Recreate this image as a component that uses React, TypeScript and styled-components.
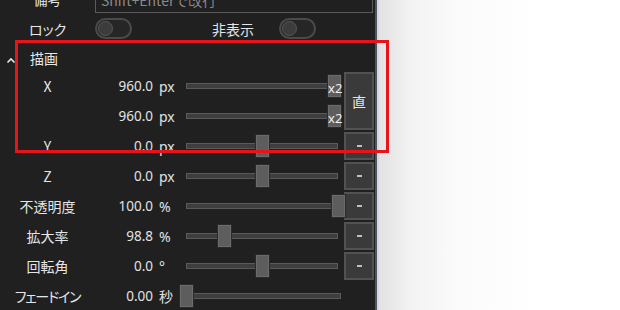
import styled, { createGlobalStyle } from 'styled-components'

const GlobalStyle = createGlobalStyle`
  html, body {
    margin: 0;
    padding: 0;
    background: #fff;
    overflow: hidden;
  }
  body {
    font-family: "Noto Sans CJK JP", "Noto Sans", sans-serif;
    font-feature-settings: "palt";
  }
`

type Param = {
  label: string
  value: string
  unit: string
  pct: number
  x2?: boolean
}

const params: Param[] = [
  { label: 'X', value: '960.0', unit: 'px', pct: 0.98, x2: true },
  { label: '', value: '960.0', unit: 'px', pct: 0.98, x2: true },
  { label: 'Y', value: '0.0', unit: 'px', pct: 0.5 },
  { label: 'Z', value: '0.0', unit: 'px', pct: 0.5 },
  { label: '不透明度', value: '100.0', unit: '%', pct: 1 },
  { label: '拡大率', value: '98.8', unit: '%', pct: 0.25 },
  { label: '回転角', value: '0.0', unit: '°', pct: 0.5 },
]

const App = () => {
  return (
    <Page>
      <GlobalStyle />
      <Panel>
        <Content>
          <NoteRow>
            <Label>備考</Label>
            <NoteInput placeholder="Shift+Enterで改行" />
          </NoteRow>
          <ToggleRow>
            <Label>ロック</Label>
            <Toggle><Knob /></Toggle>
            <Label>非表示</Label>
            <Toggle><Knob /></Toggle>
          </ToggleRow>
          <Header>
            <Chevron width="10" height="7" viewBox="0 0 10 7">
              <polyline points="1.5,5.5 5,2 8.5,5.5" fill="none" stroke="#e8e8e8" strokeWidth="1.6" />
            </Chevron>
            <HeaderTitle>描画</HeaderTitle>
          </Header>
          <ParamGrid>
            {params.map((p, i) => (
              <ParamRowCells key={i} p={p} row={i + 1} />
            ))}
            <SideButton style={{ gridRow: '1 / span 2' }}>直</SideButton>
            {[3, 4, 5, 6, 7].map((r) => (
              <SideButton key={r} style={{ gridRow: r }}>
                <Dash />
              </SideButton>
            ))}
            <Label style={{ gridRow: 8 }} $tight>フェードイン</Label>
            <Value style={{ gridRow: 8 }}>0.00</Value>
            <Unit style={{ gridRow: 8 }}>秒</Unit>
            <SliderCell style={{ gridRow: 8 }} $wide>
              <Slider $width={155}>
                <Track />
                <Thumb style={{ left: -6 }} />
              </Slider>
            </SliderCell>
          </ParamGrid>
        </Content>
      </Panel>
      <Divider />
      <Backdrop />
      <Highlight />
    </Page>
  )
}

const ParamRowCells = ({ p, row }: { p: Param; row: number }) => (
  <>
    <Label style={{ gridRow: row }}>{p.label}</Label>
    <Value style={{ gridRow: row }}>{p.value}</Value>
    <Unit style={{ gridRow: row }}>{p.unit}</Unit>
    <SliderCell style={{ gridRow: row }}>
      <Slider $width={152}>
        <Track />
        <Thumb style={{ left: Math.round(p.pct * 152 - 6.5) }}>
          {p.x2 && <ThumbTag>x2</ThumbTag>}
        </Thumb>
      </Slider>
    </SliderCell>
  </>
)

const Page = styled.div`
  position: relative;
  display: flex;
  width: 620px;
  height: 310px;
  overflow: hidden;
`

const Panel = styled.div`
  width: 375px;
  height: 310px;
  background: #202020;
  overflow: hidden;
  flex-shrink: 0;
`

const Content = styled.div`
  margin-top: -16px;
  display: flex;
  flex-direction: column;
`

const Label = styled.div<{ $tight?: boolean }>`
  width: 95px;
  text-align: center;
  color: #e6e6e6;
  font-size: 14px;
  letter-spacing: ${(p) => (p.$tight ? '-1.2px' : 'normal')};
  align-self: center;
  white-space: nowrap;
`

const NoteRow = styled.div`
  display: flex;
  align-items: center;
  height: 30px;
`

const NoteInput = styled.input`
  box-sizing: border-box;
  width: 278px;
  height: 26px;
  margin-top: 2px;
  background: #202020;
  border: 1px solid #5a5a5a;
  color: #ddd;
  font-family: "Noto Sans CJK JP", "Noto Sans", sans-serif;
  font-size: 14px;
  padding: 0 5px;
  outline: none;

  &::placeholder {
    color: #8a8a8a;
  }
`

const ToggleRow = styled.div`
  display: grid;
  grid-template-columns: 95px 92px 92px 40px;
  align-items: center;
  height: 30px;

  & > ${Label} {
    width: auto;
  }
`

const Toggle = styled.div`
  position: relative;
  box-sizing: border-box;
  width: 37px;
  height: 21px;
  border: 2px solid #4a4a4a;
  border-radius: 11px;
  background: #262626;
  margin-top: -1px;
`

const Knob = styled.div`
  position: absolute;
  left: 1px;
  top: 1px;
  box-sizing: border-box;
  width: 15px;
  height: 15px;
  border-radius: 50%;
  background: #3c3c3c;
  border: 1.5px solid #585858;
`

const Header = styled.div`
  display: flex;
  align-items: center;
  height: 27px;
  padding-left: 6px;
  gap: 14px;
`

const Chevron = styled.svg`
  display: block;
  margin-top: 5px;
`

const HeaderTitle = styled.span`
  color: #e6e6e6;
  font-size: 14px;
`

const ParamGrid = styled.div`
  display: grid;
  grid-template-columns: 95px 58px 33px 158px 30px;
  grid-auto-rows: 30px;

  & > ${Label} {
    grid-column: 1;
  }
`

const Value = styled.div`
  grid-column: 2;
  align-self: center;
  text-align: right;
  color: #e2e2e2;
  font-size: 13.5px;
  font-family: "Noto Sans", "Noto Sans CJK JP", sans-serif;
`

const Unit = styled.div`
  grid-column: 3;
  align-self: center;
  padding-left: 6px;
  color: #e2e2e2;
  font-size: 14px;
  font-family: "Noto Sans", "Noto Sans CJK JP", sans-serif;
`

const SliderCell = styled.div<{ $wide?: boolean }>`
  grid-column: ${(p) => (p.$wide ? '4 / span 2' : '4')};
  display: flex;
  align-items: center;
`

const Slider = styled.div<{ $width: number }>`
  position: relative;
  width: ${(p) => p.$width}px;
  height: 22px;
  display: flex;
  align-items: center;
`

const Track = styled.div`
  box-sizing: border-box;
  width: 100%;
  height: 6px;
  background: #3e3e3e;
  border: 1px solid #5a5a5a;
`

const Thumb = styled.div`
  position: absolute;
  top: 0;
  box-sizing: border-box;
  width: 13px;
  height: 22px;
  background: #5d5d5d;
  border: 1px solid #6b6b6b;
  box-shadow: 0 0 0 1px #2a2a2a;
`

const ThumbTag = styled.span`
  position: absolute;
  left: -1px;
  top: 5px;
  color: #f0f0f0;
  font-size: 13px;
  line-height: 14px;
  font-family: "Noto Sans", sans-serif;
`

const SideButton = styled.div`
  grid-column: 5;
  box-sizing: border-box;
  margin: 1px 0;
  display: flex;
  align-items: center;
  justify-content: center;
  background: #3a3a3a;
  border: 2px solid #525252;
  color: #e6e6e6;
  font-size: 14px;
`

const Dash = styled.div`
  width: 5px;
  height: 2px;
  background: #c0c0c0;
`

const Divider = styled.div`
  width: 2px;
  background: #4b5863;
  border-right: 2px solid #d4d8dc;
  flex-shrink: 0;
`

const Backdrop = styled.div`
  flex: 1;
  background: linear-gradient(to right, #e2e2e2 0px, #f2f2f2 30px, #fbfbfb 80px, #ffffff 160px);
`

const Highlight = styled.div`
  position: absolute;
  left: 15px;
  top: 40px;
  width: 374px;
  height: 113px;
  box-sizing: border-box;
  border: 3px solid #e8141c;
  pointer-events: none;
`

export default App
